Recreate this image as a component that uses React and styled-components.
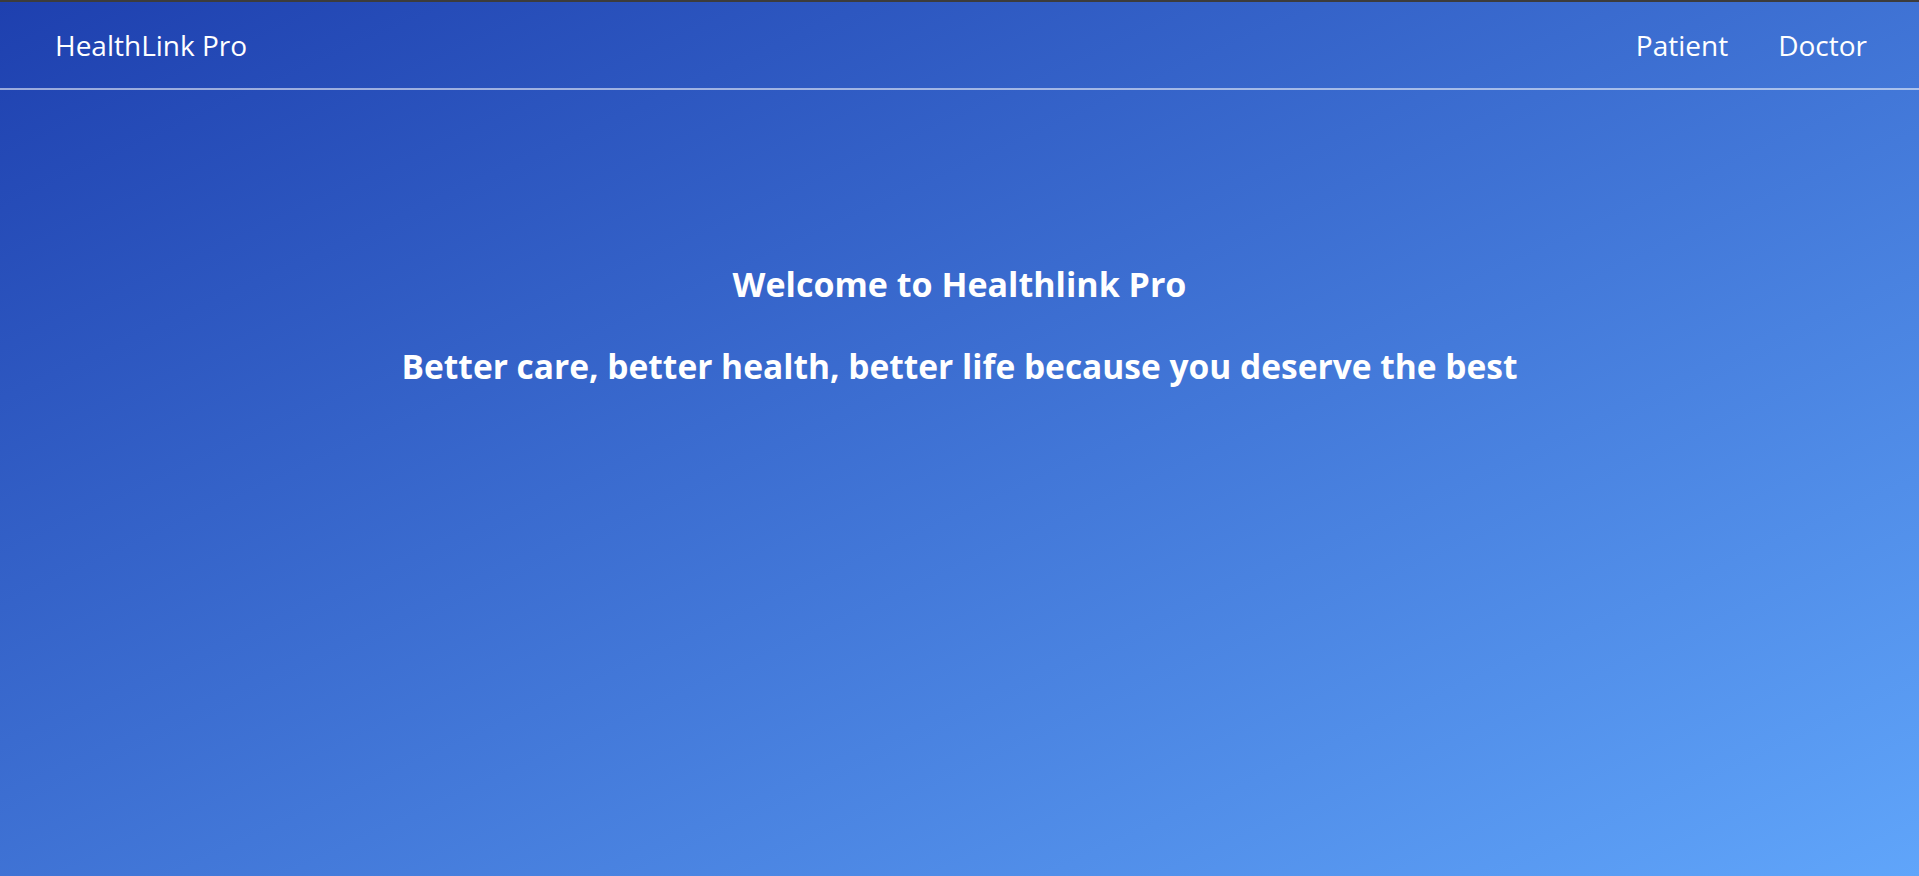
import React from 'react';
import styled, { createGlobalStyle } from 'styled-components';

const TOP_EDGE = '#3c3c3c';
const FONT = '"Open Sans", "Noto Sans", sans-serif';

const GlobalStyle = createGlobalStyle`
  html, body {
    margin: 0;
    padding: 0;
  }
  body {
    font-family: ${FONT};
    color: #ffffff;
  }
  * {
    box-sizing: border-box;
  }
`;

class App extends React.Component {
  render() {
    return (
      <Page>
        <GlobalStyle />
        <NavBar>
          <Brand>HealthLink Pro</Brand>
          <NavLinks>
            <NavLink href="#">Patient</NavLink>
            <NavLink href="#">Doctor</NavLink>
          </NavLinks>
        </NavBar>
        <Hero>
          <HeroTitle>Welcome to Healthlink Pro</HeroTitle>
          <HeroSubtitle>
            Better care, better health, better life because you deserve the best
          </HeroSubtitle>
        </Hero>
      </Page>
    );
  }
}

const Page = styled.div`
  min-height: 100vh;
  border-top: 2px solid ${TOP_EDGE};
  background: linear-gradient(to bottom right, #1e40af, #60a5fa);
  display: flex;
  flex-direction: column;
`;

const NavBar = styled.nav`
  height: 88px;
  padding: 0 52px 0 55px;
  display: flex;
  flex-direction: row;
  justify-content: space-between;
  align-items: center;
  border-bottom: 2px solid rgba(255, 255, 255, 0.55);
`;

const Brand = styled.div`
  font-size: 28px;
  font-weight: 500;
  line-height: 1;
`;

const NavLinks = styled.div`
  display: flex;
  flex-direction: row;
  align-items: center;
  gap: 50px;
`;

const NavLink = styled.a`
  font-size: 28px;
  font-weight: 500;
  line-height: 1;
  color: #ffffff;
  text-decoration: none;
  cursor: pointer;
`;

const Hero = styled.main`
  padding-top: 171px;
  display: flex;
  flex-direction: column;
  align-items: center;
  text-align: center;
  gap: 36px;
`;

const HeroTitle = styled.h1`
  margin: 0;
  font-size: 34px;
  font-weight: 700;
  line-height: 46px;
`;

const HeroSubtitle = styled.h2`
  margin: 0;
  font-size: 33.5px;
  font-weight: 700;
  line-height: 46px;
`;

export default App;
